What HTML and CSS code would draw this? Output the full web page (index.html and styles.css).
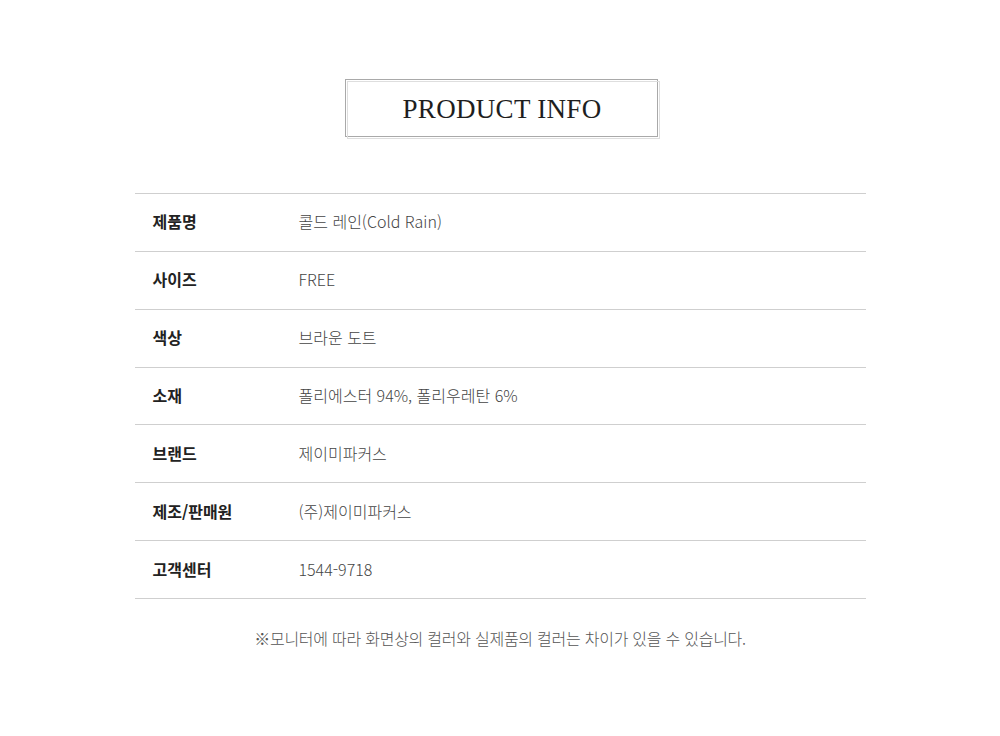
FILE: index.html
```html
<!DOCTYPE html>
<html lang="ko">
<head>
<meta charset="utf-8">
<title>Product Info</title>
<link rel="stylesheet" href="styles.css">
</head>
<body>
<div class="page">
  <div class="title-wrap">
    <h1 class="title">PRODUCT INFO</h1>
  </div>
  <div class="table">
    <div class="row"><div class="label">제품명</div><div class="value">콜드 레인(Cold Rain)</div></div>
    <div class="row"><div class="label">사이즈</div><div class="value">FREE</div></div>
    <div class="row"><div class="label">색상</div><div class="value">브라운 도트</div></div>
    <div class="row"><div class="label">소재</div><div class="value">폴리에스터 94%, 폴리우레탄 6%</div></div>
    <div class="row"><div class="label">브랜드</div><div class="value">제이미파커스</div></div>
    <div class="row"><div class="label">제조/판매원</div><div class="value">(주)제이미파커스</div></div>
    <div class="row"><div class="label">고객센터</div><div class="value">1544-9718</div></div>
  </div>
  <p class="note">※모니터에 따라 화면상의 컬러와 실제품의 컬러는 차이가 있을 수 있습니다.</p>
</div>
</body>
</html>
```
FILE: styles.css
```css
html, body {
  margin: 0;
  padding: 0;
  background: #fff;
}
.page {
  width: 1000px;
  height: 736px;
  display: flex;
  flex-direction: column;
  align-items: center;
  padding-top: 79px;
  box-sizing: border-box;
  font-family: "Noto Sans CJK KR", "Noto Sans", sans-serif;
}
.title-wrap {
  display: flex;
  justify-content: center;
  padding-left: 2px;
}
.title {
  position: relative;
  margin: 0;
  width: 313px;
  height: 58px;
  box-sizing: border-box;
  border: 1px solid #a9a9a9;
  display: flex;
  align-items: center;
  justify-content: center;
  font-family: "Liberation Serif", "Times New Roman", serif;
  font-weight: normal;
  font-size: 27px;
  color: #1e1e1e;
  letter-spacing: 0.3px;
  padding-top: 2px;
  padding-left: 2px;
}
.title::after {
  content: "";
  position: absolute;
  left: 1px;
  top: 1px;
  right: -3px;
  bottom: -3px;
  border: 1px solid #dedede;
  pointer-events: none;
}
.table {
  margin-top: 56px;
  width: 731px;
  border-top: 1px solid #cfcfcf;
}
.row {
  display: flex;
  align-items: center;
  height: 57.86px;
  box-sizing: border-box;
  border-bottom: 1px solid #cfcfcf;
  padding-bottom: 2px;
}
.label {
  width: 164px;
  padding-left: 18px;
  box-sizing: border-box;
  font-size: 16px;
  font-weight: bold;
  color: #222;
}
.value {
  font-size: 16px;
  font-weight: 300;
  color: #444;
}
.note {
  margin: 27px 0 0;
  font-size: 16px;
  font-weight: 300;
  color: #555;
  text-align: center;
  letter-spacing: -0.25px;
}
```
